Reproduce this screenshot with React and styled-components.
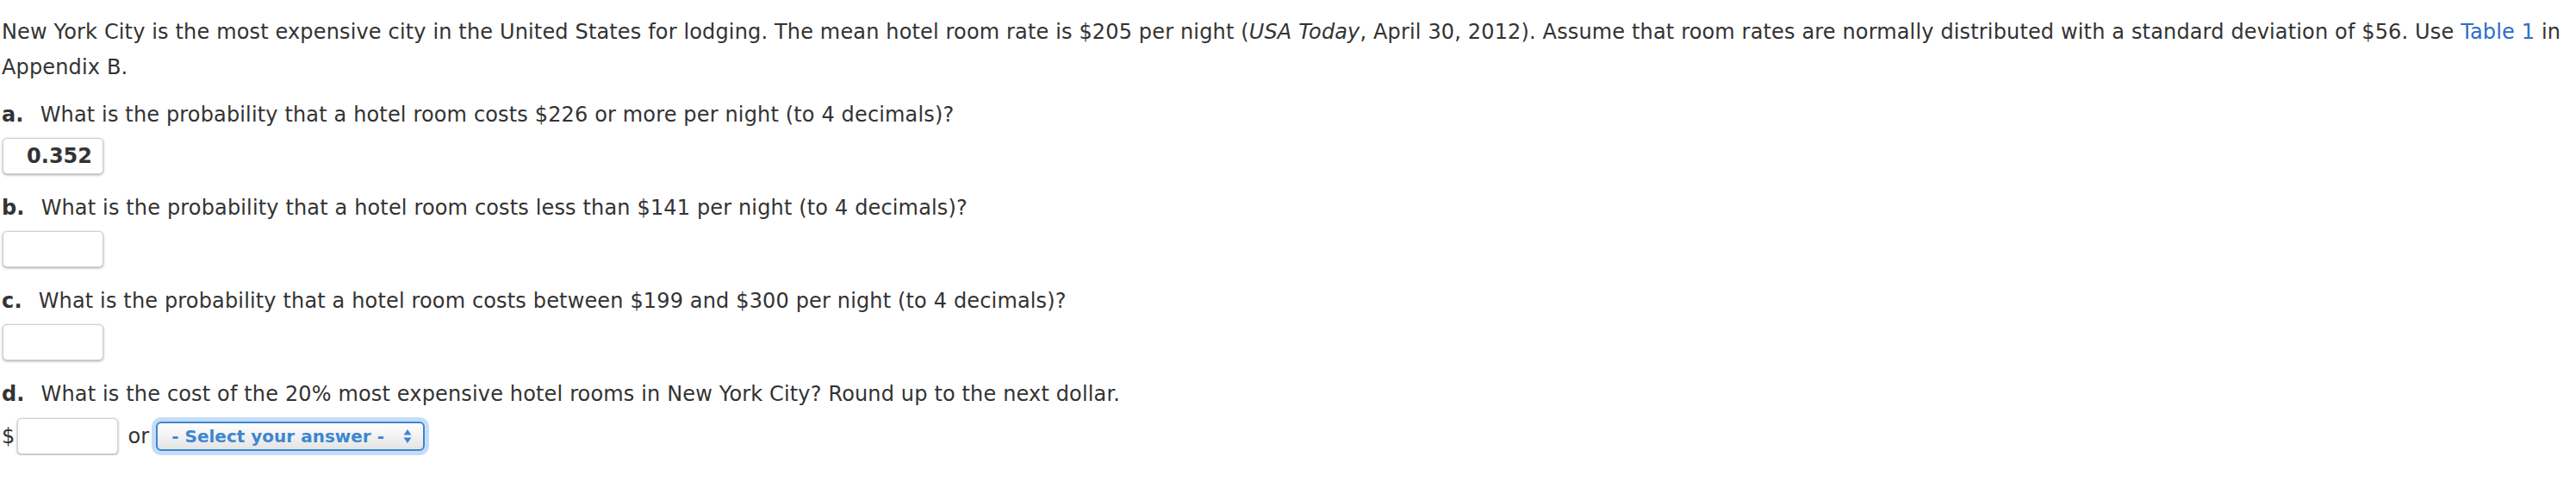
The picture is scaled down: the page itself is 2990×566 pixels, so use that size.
import styled, { createGlobalStyle } from "styled-components";

const GlobalStyle = createGlobalStyle`
  html, body {
    margin: 0;
    padding: 0;
    background: #ffffff;
  }
`;

const questions = [
  { key: "a", text: "What is the probability that a hotel room costs $226 or more per night (to 4 decimals)?", value: "0.352" },
  { key: "b", text: "What is the probability that a hotel room costs less than $141 per night (to 4 decimals)?", value: "" },
  { key: "c", text: "What is the probability that a hotel room costs between $199 and $300 per night (to 4 decimals)?", value: "" },
];

const App = () => {
  return (
    <Page>
      <GlobalStyle />
      <Intro>
        New York City is the most expensive city in the United States for lodging. The mean hotel room rate
        is $205 per night (<em>USA Today</em>, April 30, 2012). Assume that room rates are normally distributed
        with a standard deviation of $56. Use <TableLink href="#">Table 1</TableLink> in Appendix B.
      </Intro>

      {questions.map(q => (
        <Question key={q.key}>
          <Prompt>
            <Label>{q.key}.</Label>
            {q.text}
          </Prompt>
          <AnswerRow>
            <AnswerInput readOnly value={q.value} />
          </AnswerRow>
        </Question>
      ))}

      <Question>
        <Prompt>
          <Label>d.</Label>
          What is the cost of the 20% most expensive hotel rooms in New York City? Round up to the next dollar.
        </Prompt>
        <AnswerRow>
          <Dollar>$</Dollar>
          <AnswerInput readOnly value="" />
          <Or>or</Or>
          <FocusRing>
            <SelectBox role="combobox">
              <SelectText>- Select your answer -</SelectText>
              <svg width="10" height="18" viewBox="0 0 10 18">
                <path d="M5 1 L9.5 7.5 H0.5 Z" fill="#3d87cf" />
                <path d="M5 17 L9.5 10.5 H0.5 Z" fill="#3d87cf" />
              </svg>
            </SelectBox>
          </FocusRing>
        </AnswerRow>
      </Question>
    </Page>
  );
};

export default App;

/* ---------------------------- STYLED COMPONENTS --------------------------- */

const Page = styled.div`
  padding: 17px 0 0 2px;
  font-family: "DejaVu Sans", Verdana, sans-serif;
  font-size: 24px;
  line-height: 41px;
  letter-spacing: 0.15px;
  color: #333333;
`;

const Intro = styled.p`
  margin: 0 0 14px;

  em {
    font-style: italic;
  }
`;

const TableLink = styled.a`
  color: #2d6ec6;
  text-decoration: none;
`;

const Question = styled.div`
  & + & {
    margin-top: 19px;
  }
`;

const Prompt = styled.div``;

const Label = styled.b`
  font-weight: bold;
  margin-right: 19px;
`;

const AnswerRow = styled.div`
  display: flex;
  align-items: center;
  margin-top: 6px;
`;

const AnswerInput = styled.input`
  box-sizing: border-box;
  width: 117px;
  height: 42px;
  margin: 0 0 0 1px;
  padding: 0 12px;
  border: 1px solid #cfcfcf;
  border-radius: 5px;
  box-shadow: 0 1px 3px rgba(0, 0, 0, 0.35);
  background: #ffffff;
  font-family: "DejaVu Sans", Verdana, sans-serif;
  font-size: 24px;
  font-weight: bold;
  color: #333333;
  text-align: right;
  outline: none;
`;

const Dollar = styled.span`
  margin-right: 2px;
`;

const Or = styled.span`
  margin: 0 3px 0 11px;
`;

const FocusRing = styled.div`
  padding: 5px;
  border-radius: 11px;
  background: #c4ddf7;
`;

const SelectBox = styled.div`
  box-sizing: border-box;
  width: 312px;
  height: 34px;
  display: flex;
  align-items: center;
  justify-content: space-between;
  padding: 0 13px 0 16px;
  border: 2px solid #3d87cf;
  border-radius: 6px;
  background: linear-gradient(#ffffff, #f3f3f3 45%, #e4e4e4);
  color: #3d87cf;
  font-weight: bold;
`;

const SelectText = styled.span`
  font-size: 20px;
  line-height: 30px;
  letter-spacing: 0;
  white-space: nowrap;
`;
